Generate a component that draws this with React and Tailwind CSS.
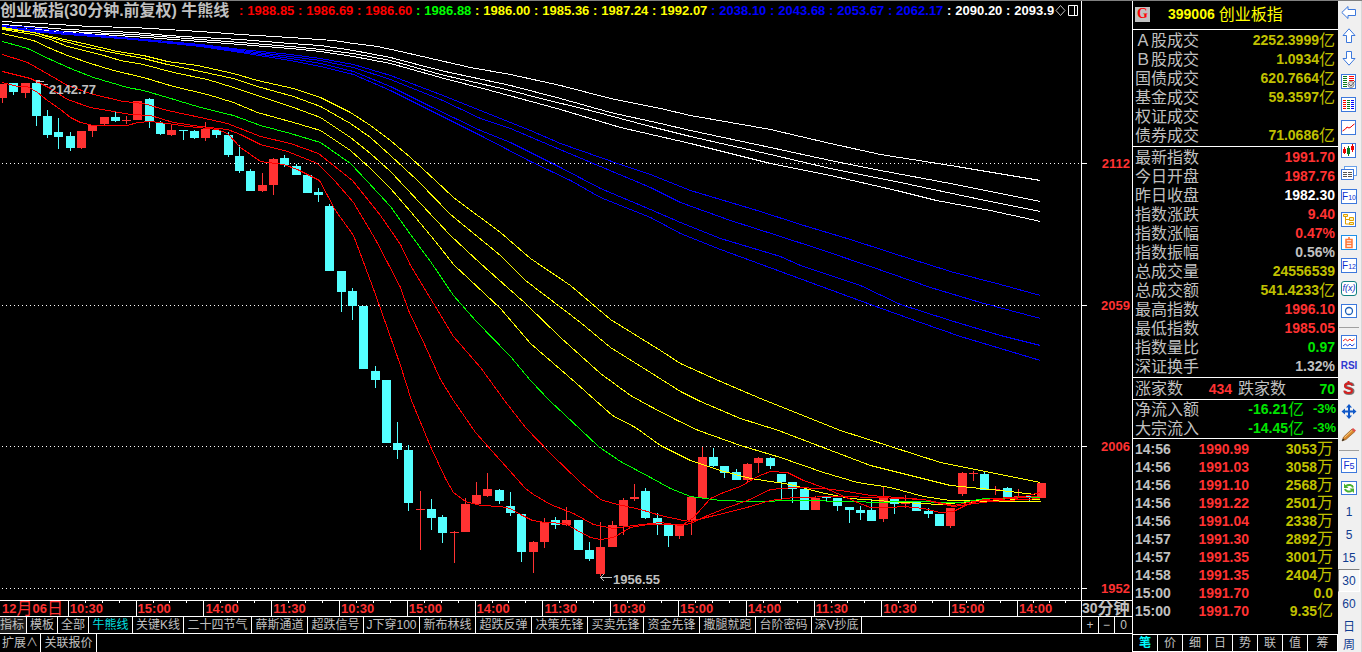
import React from "react";

const RED = "#ff3232";
const CYAN = "#54ffff";

/* body top, body bottom, wick top, wick bottom; "r" rising, "f" falling */
const CANDLES = [
  ["r", 84, 98, 84, 103], ["f", 83, 92, 83, 95], ["r", 83, 93, 83, 98], ["f", 83, 116, 81, 126],
  ["f", 116, 135, 110, 138], ["f", 132, 137, 118, 149], ["f", 136, 148, 132, 151], ["r", 131, 148, 131, 149],
  ["r", 125, 131, 125, 137], ["r", 117, 124, 117, 125], ["f", 117, 121, 111, 122], ["r", 120, 121, 116, 124],
  ["r", 101, 120, 101, 120], ["f", 99, 121, 98, 128], ["f", 123, 134, 121, 135], ["r", 130, 135, 124, 136],
  ["f", 130, 131, 130, 140], ["f", 131, 138, 130, 139], ["r", 129, 138, 122, 141], ["f", 130, 135, 129, 138],
  ["f", 135, 155, 132, 157], ["f", 156, 171, 145, 173], ["f", 171, 191, 169, 191], ["r", 185, 191, 173, 192],
  ["r", 159, 185, 158, 195], ["f", 158, 165, 155, 167], ["f", 166, 175, 164, 175], ["f", 175, 193, 175, 193],
  ["f", 192, 195, 188, 202], ["f", 206, 271, 204, 271], ["f", 271, 292, 271, 312], ["f", 291, 306, 288, 320],
  ["f", 306, 369, 306, 369], ["f", 371, 380, 366, 388], ["f", 380, 443, 380, 443], ["f", 443, 450, 422, 459],
  ["f", 450, 503, 445, 511], ["r", 509, 510, 491, 550], ["f", 509, 518, 499, 530], ["f", 517, 533, 515, 543],
  ["r", 532, 533, 531, 563], ["r", 504, 532, 498, 532], ["r", 495, 504, 482, 504], ["r", 489, 496, 473, 497],
  ["f", 490, 501, 489, 504], ["f", 506, 513, 492, 516], ["f", 514, 552, 514, 562], ["r", 542, 552, 541, 573],
  ["r", 522, 542, 518, 548], ["f", 520, 525, 517, 529], ["r", 520, 525, 507, 526], ["f", 520, 550, 520, 550],
  ["f", 550, 559, 542, 561], ["r", 547, 574, 522, 576], ["r", 525, 547, 521, 547], ["r", 500, 526, 498, 535],
  ["r", 497, 499, 484, 501], ["f", 491, 518, 488, 519], ["f", 518, 525, 513, 535], ["f", 525, 536, 525, 547],
  ["r", 525, 536, 525, 539], ["r", 497, 520, 497, 535], ["r", 457, 498, 447, 498], ["f", 457, 466, 448, 467],
  ["f", 466, 473, 466, 478], ["f", 472, 480, 469, 480], ["r", 464, 480, 463, 482], ["r", 458, 463, 457, 473],
  ["f", 458, 466, 457, 469], ["f", 474, 482, 474, 500], ["f", 482, 489, 482, 503], ["f", 489, 510, 489, 510],
  ["r", 498, 510, 496, 510], ["f", 497, 498, 497, 501], ["f", 498, 506, 498, 511], ["f", 507, 510, 507, 523],
  ["f", 510, 513, 506, 520], ["f", 510, 521, 499, 521], ["r", 498, 519, 487, 522], ["f", 498, 504, 498, 514],
  ["r", 501, 504, 495, 508], ["f", 501, 511, 501, 511], ["f", 511, 514, 508, 518], ["f", 514, 526, 514, 526],
  ["r", 508, 526, 508, 528], ["r", 473, 494, 472, 496], ["r", 473, 474, 471, 481], ["f", 474, 490, 471, 490],
  ["r", 489, 490, 486, 495], ["f", 488, 498, 487, 498], ["r", 496, 498, 489, 498], ["f", 496, 498, 495, 501],
  ["r", 483, 498, 483, 498],
];

const LINES = [
  ["#fff", "2,21 57,24 90,26 133,27 200,31 240,34 290,37 333,40 353,43 377,46 400,51 470,67 510,74 560,85 610,98 660,108 690,115 770,129 830,143 880,154 950,165 1040,180"],
  ["#fff", "2,24 67,29 133,32 167,35 200,37 240,39 290,43 320,45 353,50 390,57 440,70 510,85 560,98 610,112 660,123 690,130 770,147 830,160 880,170 950,183 1040,201"],
  ["#fff", "2,27 67,31 133,34 200,39 240,42 290,46 320,49 353,53 390,60 440,74 510,90 540,98 590,110 650,126 690,136 770,154 830,168 900,182 980,199 1040,211"],
  ["#fff", "2,28 67,32 133,36 200,41 240,44 290,48 320,51 353,56 390,63 440,77 490,90 560,109 620,127 690,143 770,163 830,175 896,190 936,200 990,210 1040,221"],
  ["#00f", "2,25 30,27 67,32 133,38 167,41 200,44 240,49 290,54 320,58 353,64 390,75 440,94 470,106 500,118 530,130 560,143 620,164 650,174 690,190 720,199 760,211 800,224 850,239 890,252 950,271 1000,284 1040,295"],
  ["#00f", "2,26 30,29 67,33 133,38 200,44 240,50 290,56 320,60 353,67 390,79 440,99 480,118 510,128 550,145 600,166 650,187 680,202 730,220 780,236 820,249 870,266 930,287 980,302 1040,318"],
  ["#00f", "2,27 30,30 67,33 133,39 200,45 240,51 290,58 320,63 353,71 390,86 430,106 480,130 510,142 560,167 600,188 650,209 680,222 720,238 780,256 800,265 860,285 900,304 950,320 1000,335 1040,345"],
  ["#00f", "2,28 30,31 67,34 133,39 200,46 240,52 290,60 320,66 353,74 390,90 430,110 480,135 530,161 570,180 600,197 650,217 680,233 720,249 780,271 810,282 870,304 920,322 960,336 1000,348 1040,360"],
  ["#ff0", "2,27 33,32 50,36 83,43 117,51 143,55 167,61 197,65 233,73 257,80 293,88 320,97 350,112 370,125 390,140 410,157 435,180 453,197 500,232 530,258 570,285 610,319 660,350 680,363 720,381 760,398 800,414 840,430 890,446 940,462 980,470 1010,476 1040,482"],
  ["#ff0", "2,28 33,32 50,37 83,46 117,53 143,58 167,64 200,71 233,78 257,86 293,96 320,106 350,123 370,137 390,155 417,180 450,214 500,255 525,280 580,322 610,347 650,372 680,391 700,401 740,418 778,430 820,446 870,465 910,475 950,485 1000,490 1035,494"],
  ["#ff0", "2,29 33,34 50,39 67,46 100,54 120,60 143,64 173,72 207,79 233,87 257,95 293,107 320,117 350,137 370,153 390,171 420,203 450,235 480,263 525,303 560,337 600,373 630,395 650,406 677,420 698,430 740,445 780,457 823,472 857,482 890,487 923,496 950,500 980,500 1040,499"],
  ["#ff0", "2,33 20,37 33,40 50,48 67,55 90,63 113,70 143,77 173,86 207,94 233,102 257,112 293,122 320,130 350,150 370,168 390,188 410,211 435,241 453,264 500,308 530,343 575,382 595,400 612,415 635,427 660,445 690,460 720,470 750,478 790,484 820,492 850,498 890,501 920,503 940,504 960,502 990,501 1040,501"],
  ["#0f0", "2,41 27,48 50,59 70,68 93,77 127,87 143,90 167,97 200,107 233,115 260,125 290,133 320,142 350,163 366,180 390,206 410,234 430,261 453,295 475,320 510,356 530,380 549,400 580,429 598,446 620,461 650,477 670,488 690,496 720,500 750,501 800,500 850,501 880,502 900,501 960,502 985,498 1040,497"],
  ["#f00", "2,54 27,62 50,75 67,85 93,94 123,101 143,103 167,110 200,117 227,123 260,136 290,143 318,153 333,165 352,180 380,215 400,244 410,265 430,298 453,336 480,367 504,400 525,427 550,453 580,482 600,499 613,503 640,509 660,515 683,520 690,521 710,516 743,508 770,500 793,497 840,496 877,497 923,499 953,505 973,501 1037,496"],
  ["#f00", "2,71 30,78 50,88 67,99 90,107 113,111 130,114 150,115 173,122 200,126 227,129 240,134 260,144 287,151 317,163 334,180 353,202 375,239 400,287 408,310 425,346 440,379 453,400 475,432 500,460 525,488 533,494 550,504 573,513 593,524 613,528 633,525 660,522 680,525 690,523 707,515 727,507 747,500 770,489 793,487 823,488 847,491 870,495 897,497 923,499 953,506 967,504 990,501 1040,498"],
  ["#f00", "2,82 17,86 27,86 37,92 47,100 60,109 70,117 80,122 93,125 127,125 137,122 150,121 167,123 187,126 217,129 227,133 240,147 260,161 283,164 297,169 319,180 335,210 353,235 365,267 375,294 400,365 411,400 430,446 445,478 453,492 465,501 480,505 500,506 510,508 520,514 532,520 545,522 565,523 575,529 590,537 600,539 613,537 630,527 647,524 683,524 693,517 710,498 723,492 740,486 757,476 770,471 787,472 803,480 823,487 837,493 857,502 870,507 890,507 903,506 923,508 940,512 953,511 967,504 983,499 1023,496 1040,492"],
];

const GRID = [[163, "2112"], [305, "2059"], [446, "2006"], [588, "1952"]];

const HEADER = [
  ["1988.85", "text-[#ff0000]"], ["1986.69", "text-[#ff0000]"], ["1986.60", "text-[#ff0000]"],
  ["1986.88", "text-[#00ff00]"],
  ["1986.00", "text-[#ffff00]"], ["1985.36", "text-[#ffff00]"], ["1987.24", "text-[#ffff00]"], ["1992.07", "text-[#ffff00]"],
  ["2038.10", "text-[#0000ff]"], ["2043.68", "text-[#0000ff]"], ["2053.67", "text-[#0000ff]"], ["2062.17", "text-[#0000ff]"],
  ["2090.20", "text-white"], ["2093.9", "text-white"],
];

const TIMES = ["10:30", "15:00", "14:00", "11:30", "10:30", "15:00", "14:00", "11:30", "10:30", "15:00", "14:00", "11:30", "10:30", "15:00"];

const TABS = [
  ["指标", "w-[27px] bg-[#1c1c1c] pr-0.5"], ["模板", "w-[31px]"], ["全部", "w-[31px]"], ["牛熊线", "w-11 text-[#00e0e0]"],
  ["关键K线", "w-[51px]"], ["二十四节气", "w-[68px]"], ["薛斯通道", "w-14"], ["超跌信号", "w-14"],
  ["J下穿100", "w-14"], ["新布林线", "w-14"], ["超跌反弹", "w-14"], ["决策先锋", "w-14"], ["买卖先锋", "w-14"],
  ["资金先锋", "w-14"], ["撒腿就跑", "w-14"], ["台阶密码", "w-14"], ["深V抄底", "w-[50px]"],
];

const Y = "text-[#c0c000]";
const R = "text-[#ff3232]";
const G = "text-[#00e600]";
const S = "text-[#c0c0c0]";

const TURNOVER = [
  ["Ａ股成交", "2252.3999", "亿", Y], ["Ｂ股成交", "1.0934", "亿", Y], ["国债成交", "620.7664", "亿", Y],
  ["基金成交", "59.3597", "亿", Y], ["权证成交", "", "", Y], ["债券成交", "71.0686", "亿", Y],
];

const QUOTE = [
  ["最新指数", "1991.70", "", R], ["今日开盘", "1987.76", "", R], ["昨日收盘", "1982.30", "", "text-white"],
  ["指数涨跌", "9.40", "", R], ["指数涨幅", "0.47%", "", R], ["指数振幅", "0.56%", "", S],
  ["总成交量", "24556539", "", Y], ["总成交额", "541.4233", "亿", Y], ["最高指数", "1996.10", "", R],
  ["最低指数", "1985.05", "", R], ["指数量比", "0.97", "", G], ["深证换手", "1.32%", "", S],
];

const TRADES = [
  ["14:56", "1990.99", "3053", "万"], ["14:56", "1991.03", "3058", "万"], ["14:56", "1991.10", "2568", "万"],
  ["14:56", "1991.22", "2501", "万"], ["14:56", "1991.04", "2338", "万"], ["14:57", "1991.30", "2892", "万"],
  ["14:57", "1991.35", "3001", "万"], ["14:58", "1991.35", "2404", "万"], ["15:00", "1991.70", "0.0", ""],
  ["15:00", "1991.70", "9.35", "亿"],
];

const SIDE_TABS = ["笔", "价", "细", "日", "势", "联", "值", "筹"];

function Chart() {
  return (
    <svg viewBox="0 20 1132 580" className="block h-auto w-full" role="img" aria-label="创业板指 K线图">
      <g shapeRendering="crispEdges" fill="none">
        {GRID.map(([y]) => (
          <g key={y}>
            <path d={`M2 ${y}.5H1081`} stroke="#fff" strokeDasharray="1 3" />
            <path d={`M1082 ${y}.5H1087`} stroke="#fff" />
          </g>
        ))}
        <path d="M1081.5 20V600" stroke="#fff" />
        {CANDLES.map(([kind, top, bottom, high, low], i) => {
          const x = Math.round(-2 + 11.289 * i);
          return (
            <g key={i} fill={kind === "r" ? RED : CYAN}>
              <rect x={x} y={top} width="9" height={bottom - top} />
              <rect x={x + 4} y={high} width="1" height={low - high} />
            </g>
          );
        })}
        <g transform="translate(.5 .5)">
          {LINES.map(([color, points], i) => (
            <polyline key={i} points={points} stroke={color} />
          ))}
        </g>
        <g stroke="#c0c0c0">
          <path d="M37 81.5H44M44 84.5H48M36.5 80V84M37 80.5H40M38 83.5H40" />
          <path d="M601 577.5H612M604 574L601 577.5L604 581" />
        </g>
      </g>
      <g className="font-bold" fontSize="13">
        <text x="49" y="94" fill="#c0c0c0">2142.77</text>
        <text x="613" y="584" fill="#c0c0c0">1956.55</text>
        {GRID.map(([y, label]) => (
          <text key={y} x="1130" y={y + 5} fill={RED} textAnchor="end">{label}</text>
        ))}
      </g>
    </svg>
  );
}

function Row({ item }) {
  const [label, value, unit, color] = item;
  return (
    <div className="flex h-[19px] items-center justify-between pr-[3px] pl-0.5">
      <dt>{label}</dt>
      <dd className={`flex items-center ${color}`}>
        <span className="pb-0.5 text-sm leading-4 font-bold">{value}</span>
        {unit && <span>{unit}</span>}
      </dd>
    </div>
  );
}

function Flow({ label, amount, pct }) {
  return (
    <div className="flex h-[19px] items-center pr-0.5 pl-0.5">
      <dt>{label}</dt>
      <dd className="flex flex-1 items-center justify-end text-[#00e600]">
        <span className="pb-0.5 text-sm leading-4 font-bold">{amount}</span>
        <span>亿</span>
        <span className="w-8 pb-0.5 text-right text-[13px] leading-4 font-bold">{pct}</span>
      </dd>
    </div>
  );
}

const B = "#3c78dc";
const frame = <rect x=".5" y=".5" width="14" height="14" fill="#fff" stroke={B} />;

function dashes(x, color, rows, w = 3) {
  return <path d={rows.map((y) => `M${x} ${y}.5h${w}`).join("")} stroke={color} shapeRendering="crispEdges" />;
}

const glyphs = {
  left: <path d="M.8 7.5L7 1.5V4.5H14.5V10.5H7V13.5Z" fill="#fff" stroke={B} />,
  up: <path d="M8 .8L2 7.5H5.5V14.5H10.5V7.5H14Z" fill="#fff" stroke={B} />,
  down: <path d="M8 14.2L2 7.5H5.5V.5H10.5V7.5H14Z" fill="#fff" stroke={B} />,
  check: (
    <>
      {frame}
      {dashes(2, "#087a1c", [2, 4, 6, 8, 10, 12], 4)}
      {dashes(8, "#f00", [2, 4, 6], 5)}
      <circle cx="10" cy="10.5" r="3" fill="#ddd" stroke="#888" />
      <path d="M8 10l2 2 4-5" fill="none" stroke="#666" />
    </>
  ),
  table: (
    <>
      {frame}
      {dashes(2, "#f00", [3, 5, 7, 9, 11])}
      {dashes(6, "#087a1c", [3, 5, 7, 9, 11])}
      {dashes(10, "#00f", [3, 5, 7, 9, 11])}
    </>
  ),
  line: <>{frame}<path d="M1.5 11l3-2 1.5-2 2 1 2-1 2-2 1.5-1" fill="none" stroke="#e00" /></>,
  candles: (
    <>
      {frame}
      <path d="M3.5 4v7M11.5 1v8" stroke="#e00" /><path d="M2 6h3v4H2zM10 3h3v4h-3z" fill="#e00" />
      <path d="M7.5 3v10" stroke="#087a1c" /><path d="M6 5h3v6H6z" fill="#087a1c" />
    </>
  ),
  windows: (
    <>
      <rect x="3.5" y=".5" width="12" height="9" fill="#fff" stroke="#6aa0e8" />
      <rect x=".5" y="3.5" width="12" height="10" fill="#fff" stroke={B} />
      {dashes(2, "#555", [6, 8, 10], 4)}{dashes(7, "#555", [6, 8, 10], 4)}
    </>
  ),
  tree: (
    <>
      {frame}
      <path d="M4.5 5v7H9M4.5 7.5H9" fill="none" stroke="#e0a000" />
      <path d="M2.5 2.5h4v2h-4zM8.5 5.5h4v3h-4zM8.5 10.5h4v2h-4z" fill="#fff3b0" stroke="#e0a000" />
    </>
  ),
  self: (
    <>
      <rect x=".5" y=".5" width="15" height="14" fill="#fff" stroke="#1e90e8" />
      <path d="M5 4.5h6v8H5zM5 7h6M5 9.5h6M8 2v2" fill="none" stroke="#ff7838" strokeWidth="1.5" />
    </>
  ),
  circle: (
    <>
      <rect x=".5" y=".5" width="15" height="13" fill="#fff" stroke={B} />
      <circle cx="8" cy="7" r="3.5" fill="none" stroke="#1e60b8" strokeWidth="1.3" />
    </>
  ),
  waves: (
    <>
      <rect x=".5" y=".5" width="15" height="13" fill="#fff" stroke={B} />
      <path d="M2 6l2.500-2 2 2 2.500-2 2 2 2.500-2" fill="none" stroke="#e22" />
      <path d="M2 11l2.500-2 2 2 2.500-2 2 2 2.500-2" fill="none" stroke="#24d" />
    </>
  ),
  dollar: (
    <>
      <path d="M12 5c0-2-2-2.5-4-2.5S4.500 3.300 4.500 5c0 3 7.500 1.500 7.500 5 0 2-2 2.500-4 2.500S4 12 4 10" fill="none" stroke="#777" strokeWidth="3" />
      <path d="M11 4.500C11 3 9.500 2.500 7.500 2.500S4 3.300 4 5c0 3 7 1.500 7 4.500 0 2-1.500 2.500-3.500 2.500S3.500 11 3.500 9.500M7.500 0v2.500" fill="none" stroke="#d82020" strokeWidth="2" />
    </>
  ),
  move: (
    <path transform="translate(.5 0)" d="M7.5 0L10.5 3.5H8.5V6.5H11.5V4.5L15 7.5L11.5 10.5V8.5H8.5V11.5H10.5L7.5 15L4.5 11.5H6.5V8.5H3.5V10.5L0 7.5L3.5 4.5V6.5H6.5V3.5H4.5Z" fill="#1058c8" />
  ),
  pencil: (
    <>
      <path d="M1 14l1.500-4L11 2l3 2.500L5 12.500Z" fill="#d8862c" stroke="#7a5020" strokeWidth=".6" />
      <path d="M3.500 10.500L11.500 3" stroke="#ffd080" /><path d="M10.500 2.500L12 1l3 2.500L13.500 5Z" fill="#e05050" />
      <path d="M1 14l1-2.500 1.500 1.500Z" fill="#222" />
    </>
  ),
  refresh: (
    <>
      <rect x=".5" y=".5" width="15" height="13" fill="#fff" stroke={B} />
      <path d="M12 6.500C11.500 4 7.500 3 5 5M4 8C4.500 10.500 8.500 11.500 11 9.500" fill="none" stroke="#48b030" strokeWidth="2" />
      <path d="M3 2.500V7H7.500ZM13 12V7.500H8.500Z" fill="#48b030" />
    </>
  ),
};

const TOOLS = [
  ["后退", "left"], ["向上", "up"], ["向下", "down"], ["选股", "check"], ["报价", "table"], ["分时", "line"],
  ["K线", "candles"], ["窗口", "windows"], ["F10"], ["板块", "tree"], ["自选", "self"], ["F12"], ["f(x)"], ["周期", "circle"],
  ["-"], ["指标", "waves"], ["RSI"], ["交易", "dollar"], ["移动", "move"], ["画线", "pencil"],
  ["-"], ["F5"], ["刷新", "refresh"], ["1"], ["5"], ["15"], ["30"], ["60"], ["日"], ["周"],
];

function Tool({ name, icon }) {
  if (name === "-") {
    return <div className="flex h-2 w-full shrink-0 items-center px-px"><div className="h-px w-full bg-[#a0a0a0]" /></div>;
  }
  let body;
  if (icon) {
    body = <svg viewBox="0 0 16 15" className="h-[15px] w-4">{glyphs[icon]}</svg>;
  } else if (/^F/.test(name)) {
    body = (
      <span className="flex h-[15px] w-4 items-baseline justify-center border border-[#3c78dc] bg-white pt-px text-[10px] leading-3 text-[#1030d0]">
        F<span className={name === "F5" ? "text-[9px]" : "text-[7px]"}>{name.slice(1)}</span>
      </span>
    );
  } else if (name === "f(x)") {
    body = <span className="flex h-[15px] w-4 items-center justify-center rounded-[3px] border border-[#108080] bg-white text-[9px] leading-none text-[#1030c0] italic">{name}</span>;
  } else if (name === "RSI") {
    body = <span className="text-[10px] font-bold text-[#3038d0]">{name}</span>;
  } else {
    body = <span className="text-xs leading-3 text-[#103c90]">{name}</span>;
  }
  const pressed = name === "30" ? "border border-t-[#808080] border-r-white border-b-white border-l-[#808080] bg-[#f8f8f8]" : "";
  return (
    <button type="button" aria-label={name} className={`flex w-full shrink-0 items-center justify-center ${name === "周" ? "h-3.5" : "h-[23px]"} ${pressed}`}>
      {body}
    </button>
  );
}

export default function App() {
  return (
    <div className="flex h-screen overflow-hidden border-t border-[#808080] bg-black font-['Liberation_Sans','Noto_Sans_CJK_SC',sans-serif] text-[#c0c0c0]">
      <main className="min-w-0 flex-1">
        <header className="flex h-[19px] font-bold">
          <div className="flex min-w-0 flex-1 items-center overflow-hidden whitespace-nowrap">
            <h1 className="w-[239px] shrink-0 text-base leading-[19px] font-bold">创业板指(30分钟.前复权) 牛熊线</h1>
            {HEADER.map(([value, color]) => (
              <span key={value} className={`flex w-[59px] shrink-0 gap-1 text-[13px] ${color}`}>
                <span>:</span>
                <span>{value}</span>
              </span>
            ))}
          </div>
          <div className="flex w-[77px] shrink-0 items-center">
            <button type="button" aria-label="参数" className="w-[13px]">
              <svg viewBox="0 0 11 11" className="size-[11px]"><path d="M5.500 .5L10 5.500L5.500 10.500L1 5.500Z" fill="none" stroke="#c0c0c0" /></svg>
            </button>
            <button type="button" aria-label="分栏" className="w-[13px]">
              <svg viewBox="0 0 11 11" className="size-[11px]"><path d="M.5 .5h9v10h-9zM6.5 .5v10" fill="none" stroke="#fff" /></svg>
            </button>
            <div className="h-full flex-1 border-l border-white" />
          </div>
        </header>

        <Chart />

        <div className="flex h-[17px] border-y border-white text-[13px] leading-4 font-bold text-[#ff3232]">
          <div className="flex min-w-0 flex-1">
            <div className="flex min-w-0 grow-[68] basis-0 pl-0.5 whitespace-nowrap">
              12<span className="text-base leading-[15px] font-normal">月</span>06<span className="text-base leading-[15px] font-normal">日</span>
            </div>
            {[...TIMES, "14:00"].map((time, i) => (
              <div key={i} className={`relative min-w-0 basis-0 border-l border-white pl-px ${i === 14 ? "grow-[64]" : "grow-[68]"}`}>
                <span className="absolute inset-x-0 top-0 flex justify-evenly">
                  <i className="h-0.5 w-px bg-white" /><i className="h-0.5 w-px bg-white" /><i className="h-0.5 w-px bg-white" />
                </span>
                {time}
              </div>
            ))}
          </div>
          <div className="flex w-[51px] border-l border-white text-sm leading-[15px] whitespace-nowrap text-[#c0c0c0]">
            30<span className="text-base leading-[15px]">分钟</span>
          </div>
        </div>

        <nav className="flex h-[17px] border-b border-white text-xs leading-4">
          {TABS.map(([label, style]) => (
            <button key={label} type="button" className={`flex shrink-0 justify-center border-r border-white whitespace-nowrap ${style}`}>{label}</button>
          ))}
          <span className="flex-1" />
          <button type="button" className="w-[17px] border-l border-white">+</button>
          <button type="button" className="w-4 border-l border-white">−</button>
          <button type="button" className="w-[18px] border-l border-white">0</button>
        </nav>

        <nav className="flex h-[18px] text-xs leading-4">
          <button type="button" className="w-[41px] border-r border-white whitespace-nowrap">扩展∧</button>
          <button type="button" className="w-14 border-r border-white whitespace-nowrap">关联报价</button>
        </nav>
      </main>

      <aside className="flex w-[206px] shrink-0 flex-col border-l border-white text-base leading-[19px] whitespace-nowrap">
        <div className="flex h-[29px] items-center border-b border-white pb-0.5 pl-0.5 text-[#ffff00]">
          <span className="flex size-[15px] items-center justify-center bg-[#c0c0c0] font-['Liberation_Serif',serif] text-sm leading-none font-bold text-[#ff0000]">G</span>
          <h2 className="flex items-center gap-1 pl-[18px]">
            <span className="text-sm font-bold">399006</span>
            <span>创业板指</span>
          </h2>
        </div>
        <dl className="border-b border-white py-px">
          {TURNOVER.map((item) => <Row key={item[0]} item={item} />)}
        </dl>
        <dl className="border-b border-white py-px">
          {QUOTE.map((item) => <Row key={item[0]} item={item} />)}
        </dl>
        <dl className="flex h-[22px] items-center border-b border-white pr-[3px] pl-0.5">
          <dt>涨家数</dt>
          <dd className="w-[49px] text-right text-sm font-bold text-[#ff3232]">434</dd>
          <dt className="pl-1.5">跌家数</dt>
          <dd className="flex-1 text-right text-sm font-bold text-[#00e600]">70</dd>
        </dl>
        <dl className="border-b border-white">
          <Flow label="净流入额" amount="-16.21" pct="-3%" />
          <Flow label="大宗流入" amount="-14.45" pct="-3%" />
        </dl>
        <div className="flex-1 pt-px">
          <table className="w-full table-fixed text-sm leading-[18px] font-bold">
            <tbody>
              {TRADES.map(([time, price, volume, unit], i) => (
                <tr key={i} className="h-[18px]">
                  <td className="w-[50px] p-0 pl-0.5">{time}</td>
                  <td className="w-[66px] p-0 text-right text-[#ff3232]">{price}</td>
                  <td className="p-0 pr-[5px] text-[#c0c000]">
                    <span className="flex h-[18px] items-center justify-end">{volume}<span className="text-base leading-[18px] font-normal">{unit}</span></span>
                  </td>
                </tr>
              ))}
            </tbody>
          </table>
        </div>
        <nav className="flex h-[18px] border-y border-white text-xs leading-4">
          {SIDE_TABS.map((label, i) => (
            <button key={label} type="button" className={`border-r border-white ${i === 7 ? "flex-1" : "w-[25px]"} ${i === 0 ? "font-bold text-[#00ffff]" : ""}`}>{label}</button>
          ))}
        </nav>
      </aside>

      <nav className="flex w-6 shrink-0 flex-col items-center border-r border-[#d8d8d8] bg-[#f0f0f0] pr-px" aria-label="工具栏">
        {TOOLS.map(([name, icon], i) => <Tool key={i} name={name} icon={icon} />)}
      </nav>
    </div>
  );
}
